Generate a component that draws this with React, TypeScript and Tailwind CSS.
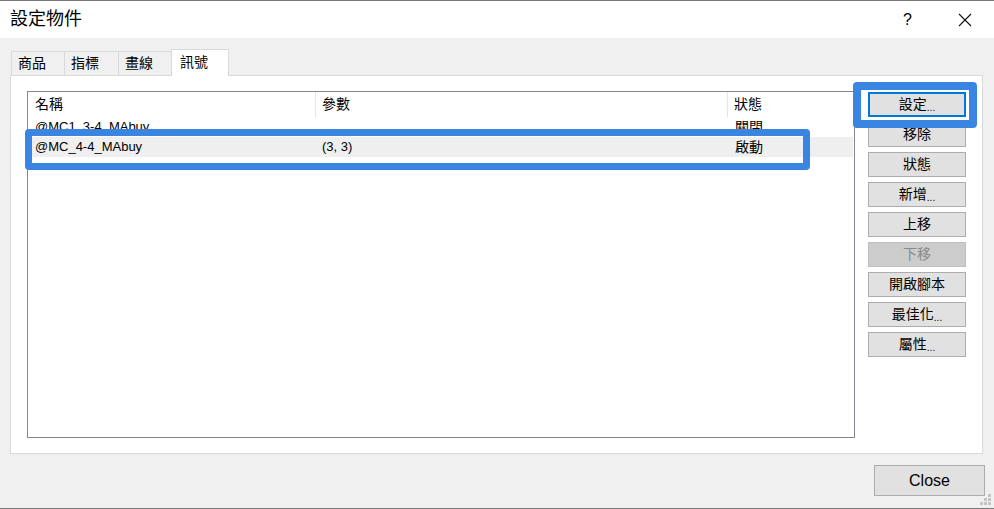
import React from "react";

const font = { fontFamily: '"Liberation Sans", "Noto Sans CJK TC", sans-serif' };

const tabs = [
  { label: "商品", w: "w-[54px]" },
  { label: "指標", w: "w-[55px]" },
  { label: "畫線", w: "w-[54px]" },
];

const buttons: { label: string; disabled?: boolean; focused?: boolean }[] = [
  { label: "設定...", focused: true },
  { label: "移除" },
  { label: "狀態" },
  { label: "新增..." },
  { label: "上移" },
  { label: "下移", disabled: true },
  { label: "開啟腳本" },
  { label: "最佳化..." },
  { label: "屬性..." },
];

function SideButton({ label, disabled, focused }: { label: string; disabled?: boolean; focused?: boolean }) {
  const dots = label.endsWith("...");
  const text = dots ? label.slice(0, -3) : label;
  return (
    <div
      className={
        "flex h-[25px] w-[98px] items-center justify-center text-[14px] " +
        (disabled
          ? "border border-[#bfbfbf] bg-[#cccccc] text-[#8a8a8a]"
          : focused
          ? "border-2 border-[#0078d7] bg-[#e1e1e1] text-black"
          : "border border-[#adadad] bg-[#e1e1e1] text-black")
      }
    >
      {text}
      {dots && <span className="text-[10px] leading-none mt-[6px]">...</span>}
    </div>
  );
}

export default function App() {
  return (
    <div
      style={font}
      className="relative flex h-[509px] w-[994px] flex-col overflow-hidden border-t border-b border-[#7a7a7a] bg-[#f0f0f0] text-black"
    >
      {/* title bar */}
      <div className="flex h-[37px] items-center bg-white pl-[10px] pr-[22px]">
        <span className="text-[18px]">設定物件</span>
        <span className="ml-auto mr-[46px] text-[16px]">?</span>
        <svg width="14" height="14" viewBox="0 0 14 14">
          <path d="M1 1 L13 13 M13 1 L1 13" stroke="#111" strokeWidth="1.1" />
        </svg>
      </div>

      {/* tabs */}
      <div className="ml-[11px] mt-[11px] flex h-[26px] items-end">
        {tabs.map((t) => (
          <div
            key={t.label}
            className={`${t.w} -mr-px flex h-[24px] items-center border border-b-0 border-[#d9d9d9] bg-[#f0f0f0] pl-[6px] text-[14px]`}
          >
            {t.label}
          </div>
        ))}
        <div className="relative z-10 -mb-px flex h-[27px] w-[58px] items-start border border-b-0 border-[#d9d9d9] bg-white pl-[8px] pt-[2px] text-[14px]">
          訊號
        </div>
      </div>

      {/* tab panel */}
      <div className="ml-[10px] flex h-[379px] w-[973px] border border-[#d9d9d9] bg-white pl-[16px] pt-[15px]">
        <div className="flex h-[347px] w-[828px] flex-col border border-[#828790] bg-white">
          <div className="flex h-[25px] text-[14px]">
            <div className="flex w-[288px] items-center border-r border-[#e5e5e5] pl-[7px]">名稱</div>
            <div className="flex w-[412px] items-center border-r border-[#e5e5e5] pl-[6px]">參數</div>
            <div className="flex flex-1 items-center pl-[6px]">狀態</div>
          </div>
          <div className="flex h-[20px] items-center text-[14px]">
            <div className="w-[288px] pl-[7px] text-[13px]">@MC1_3-4_MAbuy</div>
            <div className="w-[412px] pl-[6px]"></div>
            <div className="flex-1 pl-[7px]">關閉</div>
          </div>
          <div className="mr-px flex h-[20px] items-center bg-[#efefef] text-[14px]">
            <div className="w-[288px] pl-[7px] text-[13px]">@MC_4-4_MAbuy</div>
            <div className="w-[412px] pl-[6px] text-[13px]">(3, 3)</div>
            <div className="flex-1 pl-[7px]">啟動</div>
          </div>
        </div>

        <div className="ml-[13px] flex flex-col gap-[5px] pt-px">
          {buttons.map((b) => (
            <SideButton key={b.label} {...b} />
          ))}
        </div>
      </div>

      {/* footer */}
      <div className="mr-[9px] mt-[11px] flex justify-end">
        <div className="flex h-[31px] w-[111px] items-center justify-center border border-[#adadad] bg-[#e1e1e1] text-[16px]">
          Close
        </div>
      </div>

      {/* resize grip */}
      <svg width="12" height="12" viewBox="0 0 12 12" className="absolute bottom-[2px] right-[2px]">
        {[
          [8, 0],
          [4, 4],
          [8, 4],
          [0, 8],
          [4, 8],
          [8, 8],
        ].map(([x, y]) => (
          <rect key={`${x}-${y}`} x={x} y={y} width="3" height="3" fill="#c4c4c4" />
        ))}
      </svg>

      {/* annotation boxes */}
      <div className="absolute left-[25px] top-[128px] h-[41px] w-[785px] rounded-[4px] border-[7px] border-[#3a84e2]" />
      <div className="absolute left-[853px] top-[81px] h-[46px] w-[124px] rounded-[4px] border-[8px] border-[#3a84e2]" />
    </div>
  );
}
